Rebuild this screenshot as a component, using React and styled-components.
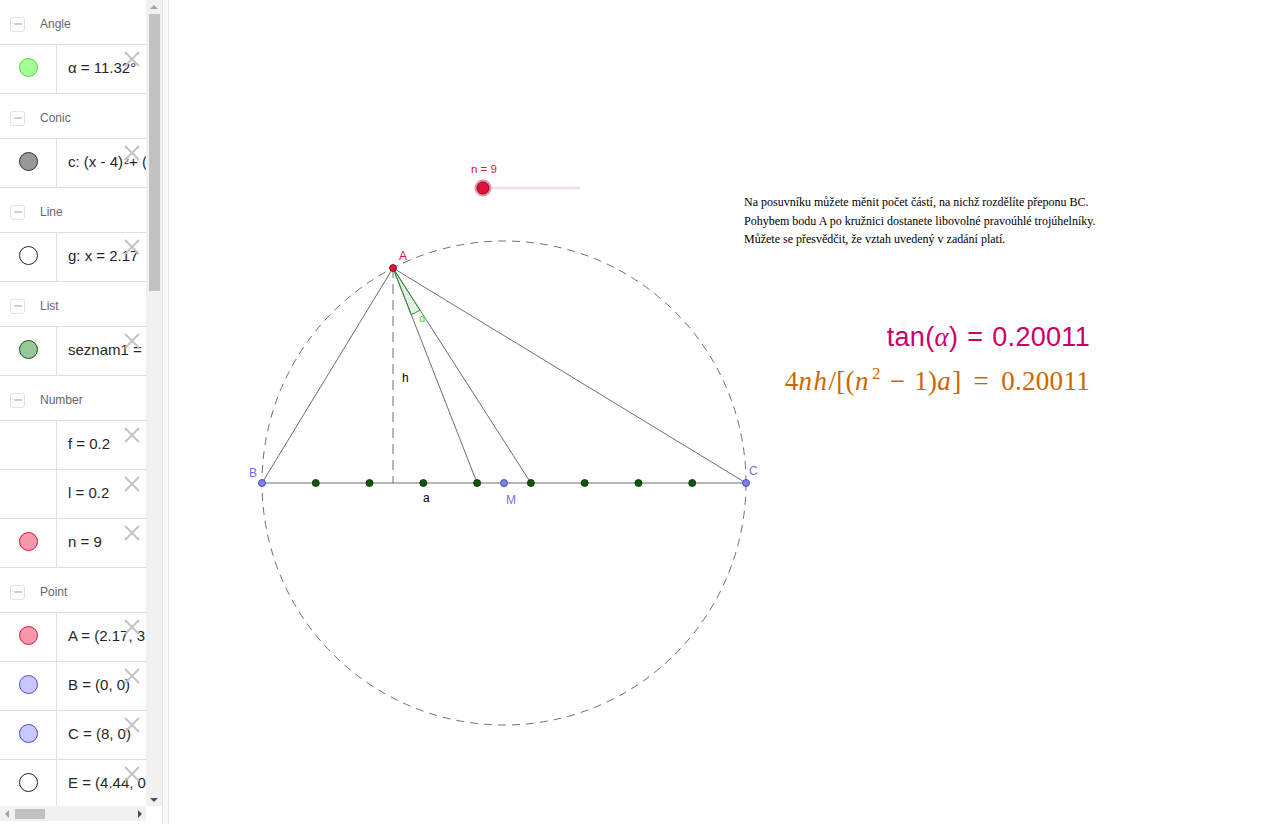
import React from 'react';
import styled, { createGlobalStyle } from 'styled-components';

const GlobalStyle = createGlobalStyle`
	html, body {
		margin: 0;
		padding: 0;
		height: 100%;
		overflow: hidden;
		background: #fff;
	}
	#root {
		height: 100%;
	}
`;

const Layout = styled.div`
	display: flex;
	width: 100vw;
	height: 100vh;
	font-family: 'Liberation Sans', Arial, sans-serif;
`;

const AlgebraView = styled.div`
	width: 162px;
	flex-shrink: 0;
	display: grid;
	grid-template-columns: 146px 16px;
	grid-template-rows: 1fr 15px;
	padding-bottom: 3px;
	box-sizing: border-box;
`;

const ItemList = styled.div`
	overflow: hidden;
	display: flex;
	flex-direction: column;
`;

const GroupHeader = styled.div`
	flex-shrink: 0;
	height: 45px;
	display: flex;
	align-items: center;
	gap: 15px;
	padding: 4px 0 0 10px;
	box-sizing: border-box;
	border-bottom: 1px solid #e0e0e0;
	font-size: 12px;
	color: #666;
`;

const CollapseButton = styled.div`
	width: 15px;
	height: 15px;
	box-sizing: border-box;
	border: 1px solid #e2e2e2;
	border-radius: 3px;
	display: flex;
	align-items: center;
	justify-content: center;

	&::after {
		content: '';
		width: 8px;
		height: 2px;
		background: #d0d0d0;
	}
`;

const ItemRow = styled.div`
	flex-shrink: 0;
	position: relative;
	height: 49px;
	display: flex;
	box-sizing: border-box;
	border-bottom: 1px solid #e0e0e0;
`;

const MarbleCell = styled.div`
	width: 56px;
	flex-shrink: 0;
	display: flex;
	align-items: center;
	justify-content: center;
	border-right: 1px solid #e0e0e0;
	padding-bottom: 3px;
`;

const Marble = styled.div`
	width: 19px;
	height: 19px;
	border-radius: 50%;
	box-sizing: border-box;
	background: ${p => p.$fill};
	border: 1px solid ${p => p.$stroke};
`;

const ItemText = styled.div`
	flex: 1;
	display: flex;
	align-items: center;
	padding: 0 0 4px 11px;
	white-space: nowrap;
	overflow: hidden;
	font-size: 15px;
	color: #262626;

	sup {
		font-size: 9px;
		line-height: 0;
		vertical-align: 6px;
		margin-left: 1px;
	}
`;

const DeleteButton = styled.svg`
	position: absolute;
	left: 124px;
	top: 6px;
	width: 16px;
	height: 16px;
`;

const VScroll = styled.div`
	grid-row: 1;
	grid-column: 2;
	background: #f1f1f1;
	display: flex;
	flex-direction: column;
	align-items: center;
	padding: 5px 0 4px;
	box-sizing: border-box;
`;

const VThumb = styled.div`
	width: 11px;
	height: 277px;
	margin-top: 5px;
	background: #c1c1c1;
`;

const Spacer = styled.div`
	flex: 1;
`;

const Arrow = styled.div`
	width: 0;
	height: 0;
	border: 4px solid transparent;
	${p => p.$dir === 'up' && `border-bottom: 4px solid #a3a3a3; border-top-width: 0;`}
	${p => p.$dir === 'down' && `border-top: 4px solid #505050; border-bottom-width: 0;`}
	${p => p.$dir === 'left' && `border-right: 4px solid #a3a3a3; border-left-width: 0;`}
	${p => p.$dir === 'right' && `border-left: 4px solid #505050; border-right-width: 0;`}
`;

const HScroll = styled.div`
	grid-row: 2;
	grid-column: 1;
	background: #f1f1f1;
	display: flex;
	align-items: center;
	padding: 0 4px 0 5px;
`;

const HThumb = styled.div`
	width: 30px;
	height: 10px;
	margin-left: 6px;
	background: #c1c1c1;
`;

const Dragger = styled.div`
	width: 7px;
	flex-shrink: 0;
	box-sizing: border-box;
	background: #f9f9f9;
	border-left: 1px solid #e2e2e2;
	border-right: 1px solid #e6e6e6;
`;

const GraphicsView = styled.div`
	flex: 1;
	position: relative;
	overflow: hidden;
	background: #fff;
`;

const Drawing = styled.svg`
	position: absolute;
	left: 0;
	top: 0;
`;

const NoteText = styled.div`
	position: absolute;
	left: 575px;
	top: 193px;
	font-family: 'Liberation Serif', 'Times New Roman', serif;
	font-size: 12px;
	line-height: 18.5px;
	color: #000;
	white-space: nowrap;
`;

const Formula = styled.div`
	position: absolute;
	right: 190px;
	top: ${p => p.$top}px;
	white-space: nowrap;
	color: ${p => p.$color};
	font-size: 27px;
	line-height: 30px;
	letter-spacing: 0.3px;
	font-family: ${p =>
		p.$serif ? "'Liberation Serif', 'Times New Roman', serif" : "'Liberation Sans', Arial, sans-serif"};

	i {
		font-family: 'Liberation Serif', 'Times New Roman', serif;
		font-style: italic;
		letter-spacing: ${p => (p.$serif ? '1.5px' : '0.3px')};
	}
	sup {
		font-size: 17px;
		line-height: 0;
		vertical-align: 11px;
		margin-left: 2px;
	}
`;

const Op = styled.span`
	display: inline-block;
	margin: 0 ${p => p.$gap}px;
`;

const groups = [
	{
		name: 'Angle',
		items: [{ fill: '#a6ff94', stroke: '#4ddd33', text: 'α = 11.32°' }],
	},
	{
		name: 'Conic',
		items: [
			{
				fill: '#999999',
				stroke: '#333333',
				text: (
					<>
						c: (x - 4)<sup>2</sup> + (y
					</>
				),
			},
		],
	},
	{
		name: 'Line',
		items: [{ fill: '#ffffff', stroke: '#222222', text: 'g: x = 2.17' }],
	},
	{
		name: 'List',
		items: [{ fill: '#99c799', stroke: '#0a5a0a', text: 'seznam1 = {(' }],
	},
	{
		name: 'Number',
		items: [
			{ text: 'f = 0.2' },
			{ text: 'l = 0.2' },
			{ fill: '#f799aa', stroke: '#e0103a', text: 'n = 9' },
		],
	},
	{
		name: 'Point',
		items: [
			{ fill: '#f799aa', stroke: '#e0103a', text: 'A = (2.17, 3.42)' },
			{ fill: '#c8c8ff', stroke: '#4a4ad8', text: 'B = (0, 0)' },
			{ fill: '#c8c8ff', stroke: '#4a4ad8', text: 'C = (8, 0)' },
			{ fill: '#ffffff', stroke: '#222222', text: 'E = (4.44, 0)' },
		],
	},
];

const AlgebraItem = ({ item }) => (
	<ItemRow>
		<MarbleCell>{item.fill && <Marble $fill={item.fill} $stroke={item.stroke} />}</MarbleCell>
		<ItemText>{item.text}</ItemText>
		<DeleteButton viewBox="0 0 16 16">
			<path d="M1 1 L15 15 M15 1 L1 15" stroke="#c4c4c4" strokeWidth="2" fill="none" />
		</DeleteButton>
	</ItemRow>
);

// graphics view offset: the canvas starts at page x = 169
const OX = 169;
const B = [262, 483];
const C = [746, 483];
const A = [393, 268];
const M = [504, 483];
const n = 9;
const parts = Array.from({ length: n - 1 }, (_, i) => B[0] + ((C[0] - B[0]) * (i + 1)) / n);
const P4 = [parts[3], 483];
const P5 = [parts[4], 483];

const sectorPoint = (P, r) => {
	const dx = P[0] - A[0];
	const dy = P[1] - A[1];
	const len = Math.hypot(dx, dy);
	return [A[0] + (dx / len) * r, A[1] + (dy / len) * r];
};

const Construction = () => {
	const s1 = sectorPoint(P4, 50);
	const s2 = sectorPoint(P5, 50);
	const labelFont = "'Liberation Sans', Arial, sans-serif";
	return (
		<Drawing width={1111} height={824} viewBox={`${OX} 0 1111 824`}>
			<circle cx={M[0]} cy={M[1]} r={242} fill="none" stroke="#707070" strokeDasharray="8 6" />
			<line x1={B[0]} y1={B[1]} x2={C[0]} y2={C[1]} stroke="#6e6e6e" />
			<line x1={A[0]} y1={A[1]} x2={B[0]} y2={B[1]} stroke="#6e6e6e" />
			<line x1={A[0]} y1={A[1]} x2={C[0]} y2={C[1]} stroke="#6e6e6e" />
			<line x1={A[0]} y1={A[1]} x2={P4[0]} y2={P4[1]} stroke="#6e6e6e" />
			<line x1={A[0]} y1={A[1]} x2={P5[0]} y2={P5[1]} stroke="#6e6e6e" />
			<line x1={A[0]} y1={A[1]} x2={A[0]} y2={483} stroke="#6e6e6e" strokeDasharray="10 6" />
			<path
				d={`M${A[0]} ${A[1]} L${s1[0]} ${s1[1]} A50 50 0 0 0 ${s2[0]} ${s2[1]} Z`}
				fill="rgba(0,100,0,0.1)"
				stroke="#2f8f2f"
				strokeWidth="1"
			/>
			<text x={419} y={322} fill="#3ddc1f" fontSize="11" fontFamily={labelFont}>α</text>
			<text x={402} y={382} fill="#000" fontSize="12" fontFamily={labelFont}>h</text>
			<text x={423} y={502} fill="#000" fontSize="12" fontFamily={labelFont}>a</text>
			<text x={399} y={260} fill="#d4103a" fontSize="12" fontFamily={labelFont}>A</text>
			<text x={249} y={477} fill="#7070ee" fontSize="12" fontFamily={labelFont}>B</text>
			<text x={749} y={475} fill="#7070ee" fontSize="12" fontFamily={labelFont}>C</text>
			<text x={506} y={504} fill="#7070ee" fontSize="12" fontFamily={labelFont}>M</text>
			{parts.map(x => (
				<circle key={x} cx={x} cy={483} r={3.5} fill="#0b5a0b" stroke="#0a200a" strokeWidth="0.8" />
			))}
			<circle cx={B[0]} cy={B[1]} r={3.5} fill="#7f7ff2" stroke="#3a3a90" strokeWidth="0.8" />
			<circle cx={C[0]} cy={C[1]} r={3.5} fill="#7f7ff2" stroke="#3a3a90" strokeWidth="0.8" />
			<circle cx={M[0]} cy={M[1]} r={3.5} fill="#7f7ff2" stroke="#3a3a90" strokeWidth="0.8" />
			<circle cx={A[0]} cy={A[1]} r={3.5} fill="#e0103a" stroke="#6a0a1a" strokeWidth="0.8" />

			{/* slider n */}
			<text x={471} y={173} fill="#e0103a" fontSize="11.5" fontFamily={labelFont}>n = 9</text>
			<line x1={483} y1={188} x2={580} y2={188} stroke="#fbdde4" strokeWidth="3" />
			<circle cx={483} cy={188} r={8.5} fill="#f28aa0" />
			<circle cx={483} cy={188} r={6} fill="#e0103a" stroke="#5a0a18" strokeWidth="0.8" />
		</Drawing>
	);
};

const App = () => (
	<Layout>
		<GlobalStyle />
		<AlgebraView>
			<ItemList>
				{groups.map(g => (
					<React.Fragment key={g.name}>
						<GroupHeader>
							<CollapseButton />
							{g.name}
						</GroupHeader>
						{g.items.map((item, i) => (
							<AlgebraItem key={i} item={item} />
						))}
					</React.Fragment>
				))}
			</ItemList>
			<VScroll>
				<Arrow $dir="up" />
				<VThumb />
				<Spacer />
				<Arrow $dir="down" />
			</VScroll>
			<HScroll>
				<Arrow $dir="left" />
				<HThumb />
				<Spacer />
				<Arrow $dir="right" />
			</HScroll>
		</AlgebraView>
		<Dragger />
		<GraphicsView>
			<Construction />
			<NoteText>
				Na posuvníku můžete měnit počet částí, na nichž rozdělíte přeponu BC.
				<br />
				Pohybem bodu A po kružnici dostanete libovolné pravoúhlé trojúhelníky.
				<br />
				Můžete se přesvědčit, že vztah uvedený v zadání platí.
			</NoteText>
			<Formula $top={322} $color="#cc0066">
				tan(<i>α</i>)<Op $gap={9}>=</Op>0.20011
			</Formula>
			<Formula $top={366} $color="#cc6600" $serif>
				4<i>nh</i>/[(<i>n</i>
				<sup>2</sup>
				<Op $gap={9}>−</Op>1)<i>a</i>]<Op $gap={12}>=</Op>0.20011
			</Formula>
		</GraphicsView>
	</Layout>
);

export default App;
